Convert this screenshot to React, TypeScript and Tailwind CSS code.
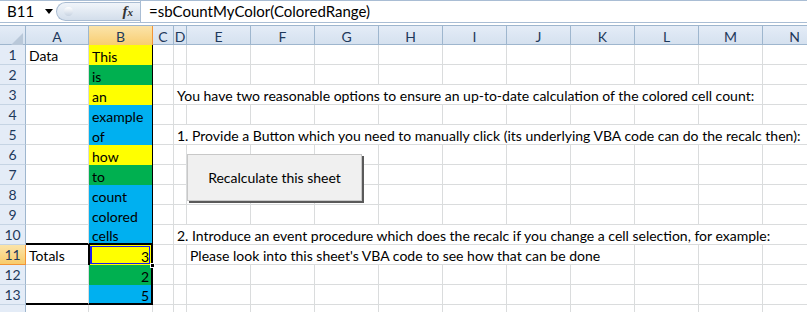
import React from "react";

const font = "font-['Lato','Liberation_Sans',sans-serif]";

const GRID =
  "grid grid-cols-[26px_63px_64px_21px_13px_64px_64px_64px_64px_64px_64px_64px_64px_64px_64px]";

const COLS = ["A", "B", "C", "D", "E", "F", "G", "H", "I", "J", "K", "L", "M", "N"];

const YELLOW = "bg-[#ffff00]";
const GREEN = "bg-[#00b050]";
const BLUE = "bg-[#00b0f0]";

const colB: [string, string][] = [
  ["This", YELLOW],
  ["is", GREEN],
  ["an", YELLOW],
  ["example", BLUE],
  ["of", BLUE],
  ["how", YELLOW],
  ["to", GREEN],
  ["count", BLUE],
  ["colored", BLUE],
  ["cells", BLUE],
  ["3", YELLOW],
  ["2", GREEN],
  ["5", BLUE],
];

// long texts that run over the neighbouring cells
const spill: Record<number, { col: number; text: string }> = {
  3: { col: 3, text: "You have two reasonable options to ensure an up-to-date calculation of the colored cell count:" },
  5: { col: 3, text: "1. Provide a Button which you need to manually click (its underlying VBA code can do the recalc then):" },
  10: { col: 3, text: "2. Introduce an event procedure which does the recalc if you change a cell selection, for example:" },
  11: { col: 4, text: "Please look into this sheet's VBA code to see how that can be done" },
};

const FormulaBar = () => (
  <div className="flex h-[23px] border-t border-b border-[#a9bdd4] bg-white">
    <div className="flex w-[56px] items-center pl-[7px] text-[15px] text-black">
      <span className="leading-none">B11</span>
      <svg className="ml-[11px]" width="8" height="5" viewBox="0 0 8 5">
        <path d="M0 0h8L4 5z" fill="#000" />
      </svg>
    </div>
    <div className="relative my-[1px] flex w-[84px] items-center justify-end rounded-l-full border border-r-0 border-[#a9bcd2] bg-gradient-to-b from-[#f1f5fa] to-[#d3deeb] pr-[7px]">
      <span className="absolute left-[7px] top-[4px] h-[9px] w-[9px] rounded-full bg-gradient-to-b from-[#ffffff] to-[#c7d3e2]" />
      <span className="font-['Liberation_Serif',serif] text-[15px] font-bold italic leading-none text-[#333]">
        f<span className="text-[11px]">x</span>
      </span>
    </div>
    <div className="flex flex-1 items-center border-l border-[#a9bdd4] pl-[8px] text-[15px] leading-none text-black">
      =sbCountMyColor(ColoredRange)
    </div>
  </div>
);

const HeaderRow = () => (
  <div className={`${GRID} h-[20px] border-t border-b border-[#9eb6ce] bg-gradient-to-b from-[#e4ecf7] to-[#d5e1ef]`}>
    <div className="relative border-r border-[#9eb6ce]">
      <svg className="absolute bottom-[2px] right-[2px]" width="12" height="12" viewBox="0 0 12 12">
        <path d="M12 0V12H0z" fill="#b9c8d9" />
      </svg>
    </div>
    {COLS.map((c) =>
      c === "B" ? (
        <div
          key={c}
          className="flex items-center justify-center border-r border-[#f29436] bg-gradient-to-b from-[#fbe4a9] to-[#f8cb6a] text-[14px] text-[#1e395b]"
        >
          {c}
        </div>
      ) : (
        <div key={c} className="flex items-center justify-center border-r border-[#9eb6ce] text-[14px] text-[#1e395b]">
          {c}
        </div>
      ),
    )}
  </div>
);

const cellBase = "relative h-[20px] border-r border-b border-[#dadcdd] text-[14px] text-black";

const Row = ({ n }: { n: number }) => {
  const b = colB[n - 1];
  const s = spill[n];
  const selected = n === 11;

  return (
    <div className={`${GRID} h-[20px]`}>
      <div
        className={
          selected
            ? "flex h-[20px] items-center justify-center border-r border-b border-r-[#f29436] border-b-[#f29436] bg-gradient-to-b from-[#fbe4a9] to-[#f8cb6a] text-[14px] text-[#1e395b]"
            : "flex h-[20px] items-center justify-center border-r border-b border-r-[#9eb6ce] border-b-[#c5d4e4] bg-[#e4ecf7] text-[14px] text-[#1e395b]"
        }
      >
        {n < 14 ? n : ""}
      </div>
      {COLS.map((c, i) => {
        if (c === "A") {
          const thick = n === 10 || n === 13;
          return (
            <div
              key={c}
              className={
                thick
                  ? "relative h-[20px] border-r border-b-2 border-r-[#dadcdd] border-b-black pl-[3px] leading-[21px] text-[14px] text-black"
                  : `${cellBase} pl-[3px] leading-[22px]`
              }
            >
              {n === 1 ? "Data" : n === 11 ? "Totals" : ""}
            </div>
          );
        }
        if (c === "B" && b) {
          const num = n > 10;
          let edge = "border-r border-r-black leading-[23px]";
          if (n === 10) edge = "border-r border-b-2 border-r-black border-b-black leading-[21px]";
          if (n === 11 || n === 12) edge = "border-r-2 border-r-black leading-[23px]";
          if (n === 13) edge = "border-r-2 border-b-2 border-black leading-[21px]";
          return (
            <div
              key={c}
              className={`relative h-[20px] ${b[1]} ${edge} text-[14px] text-black ${
                num ? "pr-[2px] text-right" : "pl-[3px]"
              }`}
            >
              {b[0]}
              {selected && (
                <>
                  <div className="pointer-events-none absolute -left-[1px] -top-[1px] bottom-0 right-0 border-l-2 border-black" />
                  <div className="pointer-events-none absolute left-[1px] top-[1px] right-[1px] bottom-[1px] border border-l-2 border-[#1b1bf0]" />
                  <div className="pointer-events-none absolute -bottom-[2px] left-0 right-0 h-[2px] bg-[#e0589c]" />
                  <div className="absolute -bottom-[3px] -right-[4px] z-20 h-[5px] w-[5px] border border-white bg-black" />
                </>
              )}
            </div>
          );
        }
        if (s && s.col === i) {
          return (
            <div key={c} className={`${cellBase} flex`}>
              <span className="relative z-10 block h-[19px] whitespace-nowrap bg-white pl-[3px] pr-[4px] leading-[22px]">
                {s.text}
              </span>
            </div>
          );
        }
        return <div key={c} className={cellBase} />;
      })}
    </div>
  );
};

export default function App() {
  const rows = Array.from({ length: 14 }, (_, i) => i + 1);

  return (
    <div className={`relative h-[312px] w-[807px] overflow-hidden bg-white ${font}`}>
      <FormulaBar />
      <div className="h-[2px] bg-white" />
      <HeaderRow />
      {rows.map((n) => (
        <Row key={n} n={n} />
      ))}
      {/* form control floating over the sheet */}
      <button className="absolute left-[187px] top-[154px] z-30 flex h-[47px] w-[175px] items-center justify-center border border-[#c8c8c8] bg-[#f0f0f0] text-[14px] text-black shadow-[2px_2px_0_#5a5a5a]">
        Recalculate this sheet
      </button>
    </div>
  );
}
